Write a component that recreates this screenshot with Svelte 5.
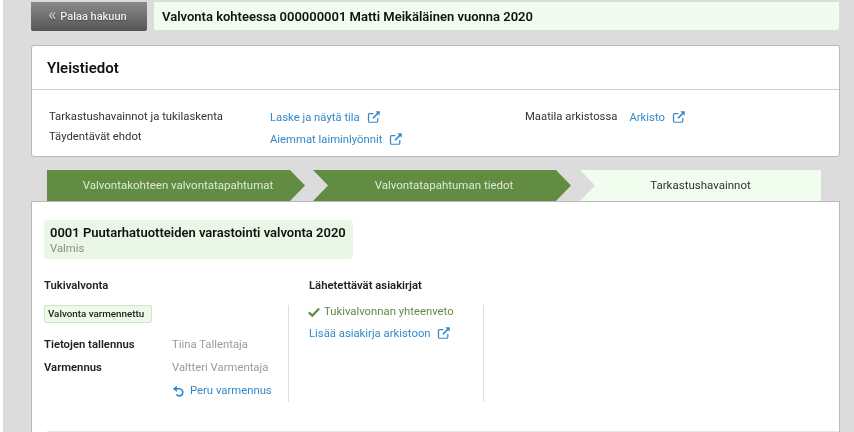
<script lang="ts">
	const generalLeft = ['Tarkastushavainnot ja tukilaskenta', 'Täydentävät ehdot'];
	const generalLinks = ['Laske ja näytä tila', 'Aiemmat laiminlyönnit'];
	const steps = [
		{ label: 'Valvontakohteen valvontatapahtumat', kind: 'first' },
		{ label: 'Valvontatapahtuman tiedot', kind: 'middle' },
		{ label: 'Tarkastushavainnot', kind: 'current' }
	];
</script>

{#snippet external()}
	<svg class="ext" viewBox="0 0 16 16" fill="none" stroke="currentColor" stroke-width="1.4">
		<path d="M12.3 9.2v3.4a1.4 1.4 0 0 1-1.4 1.4H3.1a1.4 1.4 0 0 1-1.4-1.4V5.6a1.4 1.4 0 0 1 1.4-1.4h4.2" />
		<path d="M6.8 9.4 13.4 2.8" stroke-width="1.9" />
		<path d="M9.6 1.5h5v5z" fill="currentColor" stroke="none" />
	</svg>
{/snippet}

<div class="page">
	<div class="top">
		<button class="back"><span class="chev">«</span> Palaa hakuun</button>
		<div class="banner">Valvonta kohteessa 000000001 Matti Meikäläinen vuonna 2020</div>
	</div>

	<section class="card general">
		<h2>Yleistiedot</h2>
		<div class="general-body">
			<div class="g-labels">
				{#each generalLeft as label}
					<span>{label}</span>
				{/each}
			</div>
			<div class="g-links">
				{#each generalLinks as link}
					<a href="#top">{link} {@render external()}</a>
				{/each}
			</div>
			<div class="g-archive">
				<span>Maatila arkistossa</span>
				<a href="#top">Arkisto {@render external()}</a>
			</div>
		</div>
	</section>

	<nav class="steps">
		{#each steps as step}
			<div class="step {step.kind}">{step.label}</div>
		{/each}
	</nav>

	<section class="card detail">
		<div class="event">
			<strong>0001 Puutarhatuotteiden varastointi valvonta 2020</strong>
			<span>Valmis</span>
		</div>

		<div class="columns">
			<div class="col support">
				<h3>Tukivalvonta</h3>
				<div class="col-body">
					<span class="badge">Valvonta varmennettu</span>
					<dl>
						<dt>Tietojen tallennus</dt>
						<dd>Tiina Tallentaja</dd>
						<dt>Varmennus</dt>
						<dd>Valtteri Varmentaja</dd>
					</dl>
					<a class="undo" href="#top">
						<svg viewBox="0 0 16 16" fill="none" stroke="currentColor" stroke-width="2.1">
							<path d="M3.6 4.6h5.6a4.4 4.4 0 1 1-3.8 7" />
							<path d="M1 4.7 6 .8v7.8z" fill="currentColor" stroke="none" />
						</svg>
						Peru varmennus
					</a>
				</div>
			</div>
			<div class="col docs">
				<h3>Lähetettävät asiakirjat</h3>
				<div class="col-body">
					<span class="done">
						<svg viewBox="0 0 16 16" fill="none" stroke="currentColor" stroke-width="3">
							<path d="M1.2 8.5 5.8 13 14.8 3.4" />
						</svg>
						Tukivalvonnan yhteenveto
					</span>
					<a href="#top">Lisää asiakirja arkistoon {@render external()}</a>
				</div>
			</div>
		</div>
		<div class="rule"></div>
	</section>
</div>

<style>
	:global(body) {
		margin: 0;
		background: #fff;
	}

	.page {
		box-sizing: border-box;
		width: 851px;
		height: 432px;
		margin-left: 3px;
		padding: 2px 14px 0 28px;
		overflow: hidden;
		background: #dcdcdc;
		font-family: Roboto, sans-serif;
		font-size: 11.3px;
		color: #333;
		filter: blur(0.5px);
	}

	a {
		color: #3389c9;
		text-decoration: none;
	}

	.ext {
		width: 14px;
		height: 14px;
		margin-left: 4px;
		vertical-align: -3px;
	}

	.top {
		display: flex;
		gap: 6px;
		height: 29px;
	}

	.back {
		width: 116px;
		border: 0;
		border-radius: 0 0 2px 2px;
		background: linear-gradient(#8a8a8a, #565656);
		color: #eee;
		font: 500 11px Roboto, sans-serif;
		padding: 0 3px 3px 0;
		text-shadow: 0 1px 1px #444;
		white-space: nowrap;
	}

	.chev {
		color: #ccc;
		font-size: 17px;
		line-height: 12px;
		margin-right: 1px;
	}

	.banner {
		flex: 1;
		display: flex;
		align-items: center;
		padding: 0 0 0 8px;
		background: #f0fcee;
		border: 1px solid #d3e6cd;
		border-top: 0;
		border-radius: 0 0 3px 3px;
		font-size: 13px;
		font-weight: 600;
		color: #111;
	}

	.card {
		background: #fff;
		border: 1px solid #b9b9b9;
		border-radius: 3px;
	}

	.general {
		box-sizing: border-box;
		height: 112px;
		margin-top: 14px;
	}

	h2 {
		box-sizing: border-box;
		height: 44px;
		margin: 0;
		padding: 13px 0 0 15px;
		border-bottom: 1px solid #cfcfcf;
		font-size: 15px;
		line-height: 18px;
		font-weight: 600;
		color: #111;
	}

	.general-body {
		display: flex;
		padding: 20px 0 0 17px;
		line-height: 14px;
	}

	.g-labels {
		display: flex;
		flex-direction: column;
		gap: 6px;
		width: 221px;
	}

	.g-links {
		display: flex;
		flex-direction: column;
		gap: 7px;
		width: 255px;
	}

	.g-archive {
		display: flex;
		gap: 12px;
	}

	.steps {
		display: flex;
		gap: 8px;
		height: 31px;
		margin: 13px 16px 0;
		line-height: 31px;
		text-align: center;
		font-size: 11.5px;
	}

	.step {
		width: 258px;
		padding-left: 4px;
		box-sizing: border-box;
		background: #628c42;
		color: #dfe9d6;
	}

	.step.first {
		clip-path: polygon(0 0, 243px 0, 100% 50%, 243px 100%, 0 100%);
	}

	.step.middle {
		clip-path: polygon(0 0, 243px 0, 100% 50%, 243px 100%, 0 100%, 15px 50%);
	}

	.step.current {
		width: 241px;
		margin-left: 1px;
		padding-left: 0;
		background: #f1fdee;
		color: #333;
		clip-path: polygon(0 0, 100% 0, 100% 100%, 0 100%, 15px 50%);
	}

	.detail {
		height: 240px;
		border-bottom: 0;
		border-radius: 0;
		padding: 18px 0 0 12px;
	}

	.event {
		display: flex;
		flex-direction: column;
		gap: 1px;
		box-sizing: border-box;
		width: 309px;
		height: 39px;
		padding: 5px 6px 0;
		border-radius: 4px;
		background: #eaf7e6;
		line-height: 15px;
	}

	.event strong {
		font-size: 13px;
		font-weight: 600;
		color: #111;
	}

	.event span {
		color: #8d8d8d;
	}

	.columns {
		display: flex;
		margin-top: 19px;
	}

	h3 {
		margin: 0 0 11px;
		font-size: 11.3px;
		line-height: 16px;
		font-weight: 600;
		color: #222;
	}

	.col-body {
		height: 97px;
		box-sizing: border-box;
	}

	.support {
		width: 245px;
	}

	.support .col-body {
		border-right: 1px solid #dedede;
	}

	.docs {
		width: 195px;
	}

	.docs h3 {
		padding-left: 20px;
	}

	.docs .col-body {
		display: flex;
		flex-direction: column;
		gap: 7px;
		padding-left: 20px;
		border-right: 1px solid #dedede;
		width: 195px;
		line-height: 14px;
	}

	.badge {
		display: block;
		box-sizing: border-box;
		width: 108px;
		height: 18px;
		padding-left: 3px;
		background: #eef9ea;
		border: 1px solid #cfe6c7;
		border-radius: 2px;
		font-size: 9.8px;
		font-weight: 500;
		line-height: 16px;
		color: #222;
	}

	dl {
		display: grid;
		grid-template-columns: 128px auto;
		row-gap: 9px;
		margin: 15px 0 9px;
		line-height: 14px;
	}

	dt {
		font-weight: 600;
		color: #222;
	}

	dd {
		margin: 0;
		color: #9a9a9a;
		white-space: nowrap;
	}

	.undo {
		display: flex;
		align-items: center;
		gap: 5px;
		margin-left: 128px;
		line-height: 14px;
		white-space: nowrap;
	}

	.undo svg {
		width: 13px;
		height: 13px;
	}

	.done {
		display: flex;
		align-items: center;
		gap: 4px;
		color: #5f8a44;
		white-space: nowrap;
	}

	.done svg {
		width: 12px;
		height: 12px;
		margin-left: -1px;
	}

	.rule {
		height: 1px;
		margin: 29px 0 0 3px;
		background: #e6e6e6;
	}
</style>
